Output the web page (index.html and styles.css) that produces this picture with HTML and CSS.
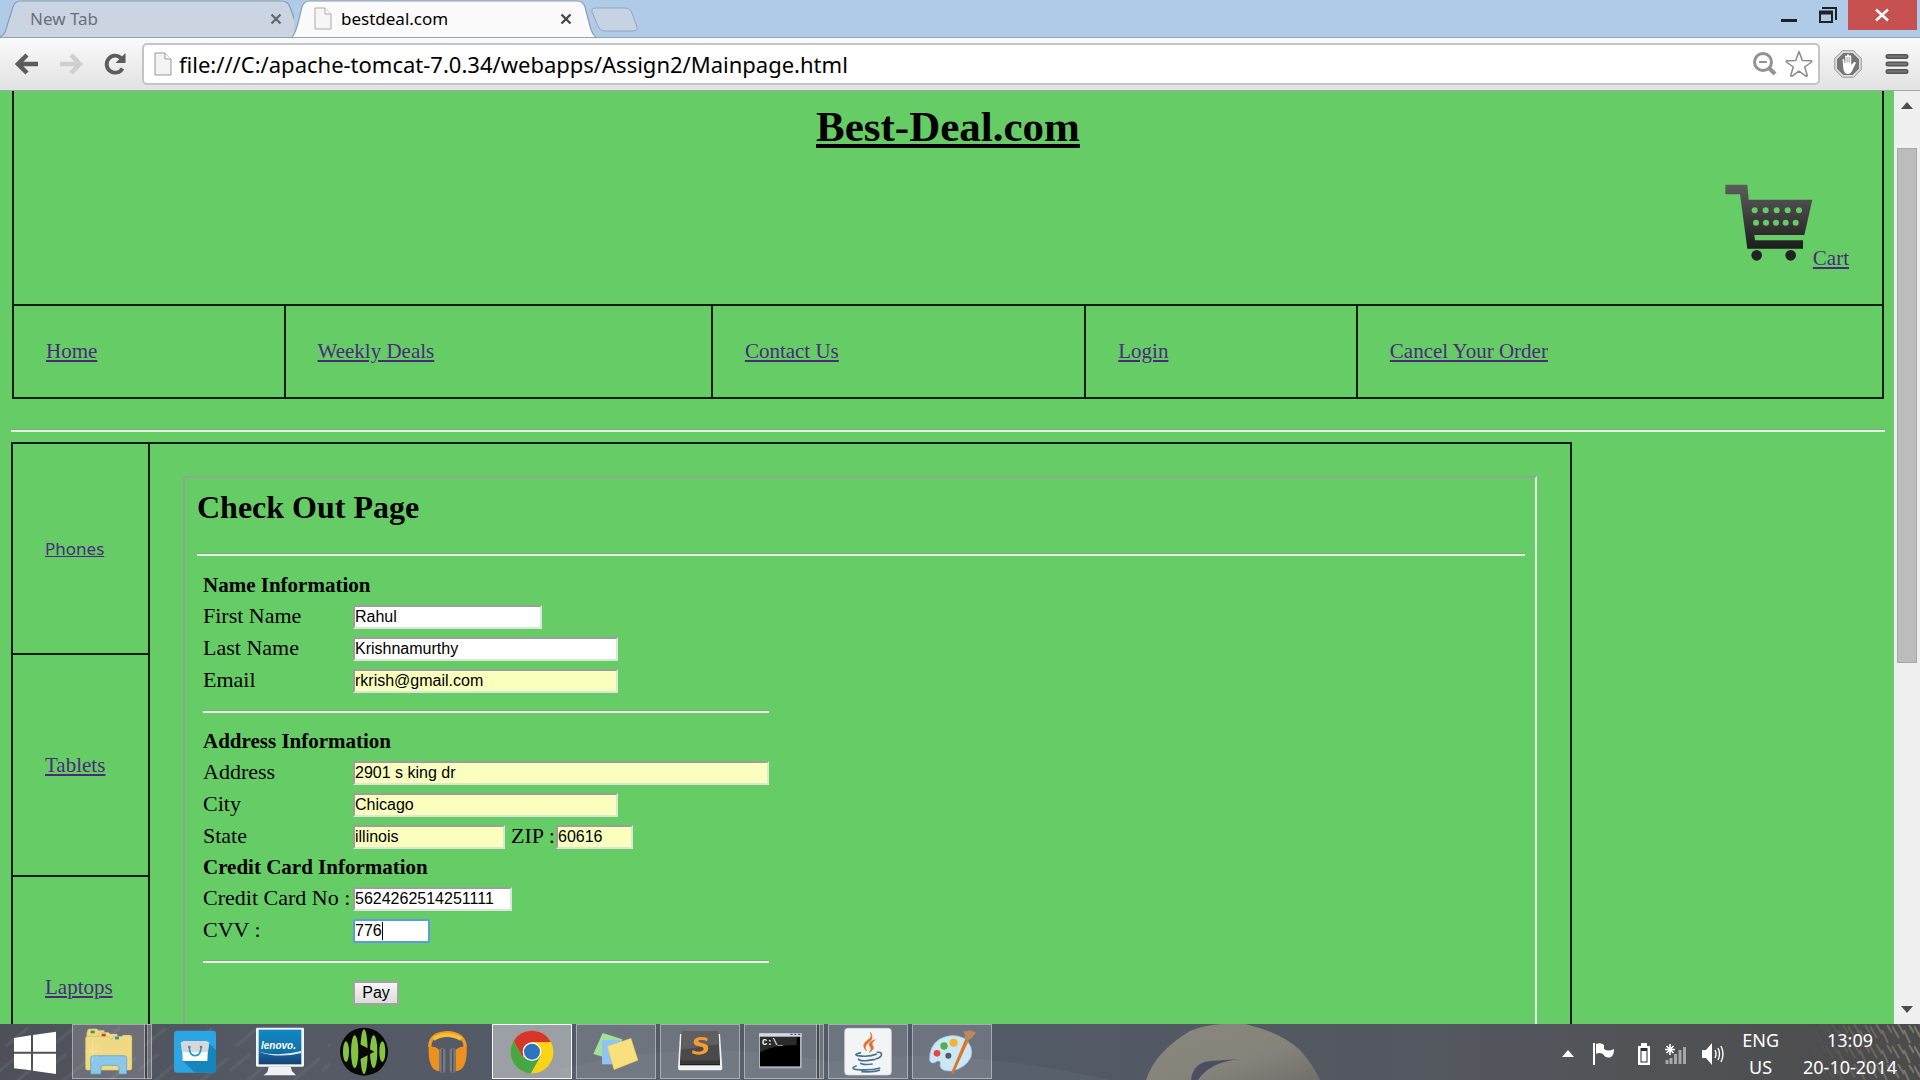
FILE: index.html
```html
<!DOCTYPE html>
<html lang="en">
<head>
<meta charset="utf-8">
<title>bestdeal.com</title>
<link rel="stylesheet" href="styles.css">
</head>
<body>
<header class="browser">
  <div class="tabstrip">
    <div class="tab tab-back">
      <svg class="tab-shape" viewBox="0 0 296 37" preserveAspectRatio="none" aria-hidden="true"><path d="M0 37C5 35 6 30 8 23L13 7Q15 1 21 1H283Q290 1 292 7L298 24V37Z" fill="#cbd5e2"/><path d="M0 37C5 35 6 30 8 23L13 7Q15 1 21 1H283Q290 1 292 7L298 24" fill="none" stroke="#8b9cb0" stroke-width="1.2"/></svg>
      <span class="tab-title">New Tab</span>
      <button class="tab-close" aria-label="Close New Tab"><svg viewBox="0 0 12 12"><path d="M1.500 1.500l9 9M10.500 1.500l-9 9" stroke="#5f6770" stroke-width="2.300"/></svg></button>
    </div>
    <div class="tab tab-front">
      <svg class="tab-shape" viewBox="0 0 304 38" preserveAspectRatio="none" aria-hidden="true"><path d="M0 38C3 35 4 31 6 24L10 7Q12 1 18 1H285Q291 1 293 7L298 27Q300 35 304 38Z" fill="#fbfbfb"/><path d="M0 38C3 35 4 31 6 24L10 7Q12 1 18 1H285Q291 1 293 7L298 27Q300 35 304 38" fill="none" stroke="#8b9cb0" stroke-width="1.200"/></svg>
      <svg class="tab-page" viewBox="0 0 18 23" aria-hidden="true"><path d="M1 1H11L17 7V22H1Z" fill="#f6f6f6" stroke="#a9a9a9"/><path d="M11 1V7H17" fill="#fff" stroke="#a9a9a9"/></svg>
      <span class="tab-title">bestdeal.com</span>
      <button class="tab-close" aria-label="Close bestdeal.com"><svg viewBox="0 0 12 12"><path d="M1.500 1.500l9 9M10.500 1.500l-9 9" stroke="#454545" stroke-width="2.300"/></svg></button>
    </div>
    <button class="tab-new" aria-label="New tab"><svg viewBox="0 0 48 25"><path d="M5 1H34Q39 1 41 6L46 20Q47 24 42 24H14Q9 24 7 19L1 5Q0 1 5 1Z" fill="#c6d3e2" stroke="#93a5ba"/></svg></button>
    <div class="window-buttons">
      <button class="win-btn" aria-label="Minimise"><svg viewBox="0 0 58 30"><path d="M21 20.500H37" stroke="#1f2223" stroke-width="3"/></svg></button>
      <button class="win-btn win-restore" aria-label="Restore"><svg viewBox="0 0 20 30"><path d="M4 8H18V20" fill="none" stroke="#1f2223" stroke-width="2"/><path d="M2 12H14V22H2Z" fill="none" stroke="#1f2223" stroke-width="2"/><path d="M1 12.500H15" stroke="#1f2223" stroke-width="4"/></svg></button>
      <button class="win-btn win-close" aria-label="Close"><svg viewBox="0 0 69 30"><path d="M28 9.500L40 20.500M40 9.500L28 20.500" stroke="#fff" stroke-width="2.500"/></svg></button>
    </div>
  </div>
  <div class="toolbar">
    <button class="tool" aria-label="Back"><svg width="26" height="26" viewBox="0 0 26 26"><path d="M24 13H5M13 4L4 13L13 22" fill="none" stroke="#5c5c5c" stroke-width="4.500"/></svg></button>
    <button class="tool" aria-label="Forward"><svg width="26" height="26" viewBox="0 0 26 26"><path d="M2 13H21M13 4L22 13L13 22" fill="none" stroke="#cfcfcf" stroke-width="4.500"/></svg></button>
    <button class="tool" aria-label="Reload"><svg width="26" height="26" viewBox="0 0 26 26"><path d="M20.500 17.500A8.500 8.500 0 1 1 19 7" fill="none" stroke="#5c5c5c" stroke-width="3.800"/><path d="M23.500 2V12H13.500Z" fill="#5c5c5c"/></svg></button>
    <div class="omnibox">
      <svg class="page-icon" viewBox="0 0 18 24" aria-hidden="true"><path d="M1 1H11L17 7V23H1Z" fill="#f3f3f3" stroke="#999"/><path d="M11 1V7H17" fill="#fff" stroke="#999"/></svg>
      <input class="url" type="text" aria-label="Address" value="file:///C:/apache-tomcat-7.0.34/webapps/Assign2/Mainpage.html">
      <button class="tool" aria-label="Zoom"><svg width="26" height="28" viewBox="0 0 26 28"><circle cx="11" cy="12" r="8.500" fill="none" stroke="#929292" stroke-width="3"/><path d="M7 12H15" stroke="#929292" stroke-width="2"/><path d="M17 18L23 24" stroke="#929292" stroke-width="4"/></svg></button>
      <button class="tool" aria-label="Bookmark this page"><svg width="28" height="28" viewBox="0 0 28 28"><path d="M14 1.500L17.300 10.500L26.500 10.700Q27 11.300 26.500 12L19.700 17L22.300 25.500Q22 26.500 21 26.200L14 21.200L7 26.200Q6 26.500 5.700 25.500L8.300 17L1.500 12Q1 11.300 1.500 10.700L10.700 10.500Z" fill="#fff" stroke="#8a8a8a" stroke-width="1.500" stroke-linejoin="round"/></svg></button>
    </div>
    <button class="tool tool-block" aria-label="AdBlock"><svg width="28" height="28" viewBox="0 0 28 28"><path d="M8.500 .7H19.500L27.300 8.500V19.500L19.500 27.300H8.500L.7 19.500V8.500Z" fill="#ddd" stroke="#999"/><path d="M9.300 3H18.700L25 9.300V18.700L18.700 25H9.300L3 18.700V9.300Z" fill="#767676"/><path d="M8.500 9.500Q9.700 8.500 10.400 10L11 13V6.200Q12 4.800 13 6.200V12.500V5Q14 3.600 15.100 5V12.500V6Q16.200 4.700 17.200 6V15L19.500 12.500Q21.200 11.300 22 12.700L18.500 20Q17 24 13.500 24Q9.500 23.500 9.300 18Z" fill="#fff"/><path d="M10.900 7V13M13.050 7V12.500M15.150 7V12.500" stroke="#767676" stroke-width=".7"/></svg></button>
    <button class="tool" aria-label="Menu"><svg width="24" height="22" viewBox="0 0 24 22"><path d="M3 3.500H21M3 11H21M3 18.500H21" stroke="#555" stroke-width="5" stroke-linecap="round"/><path d="M3 3.500H21M3 11H21M3 18.500H21" stroke="#777" stroke-width="2" stroke-linecap="round"/></svg></button>
  </div>
</header>

<div class="viewport">
  <main class="page">
    <div class="masthead">
      <div class="banner">
        <h1>Best-Deal.com</h1>
        <div class="cart">
          <svg class="cart-icon" viewBox="134 74 264 234" aria-hidden="true">
            <defs><linearGradient id="cart-fill" x1="0" y1="0" x2="0" y2="1"><stop offset="0" stop-color="#5c5c5c"/><stop offset=".6" stop-color="#383838"/><stop offset="1" stop-color="#1c1c1c"/></linearGradient></defs>
            <path d="M135 76H201L205 121H396L372 227H222L224 243H368V268H201L179 105H135Z" fill="url(#cart-fill)"/>
            <g fill="#222"><circle cx="229" cy="288" r="16"/><circle cx="331" cy="288" r="16"/></g>
            <g fill="#66cd66"><circle cx="223" cy="153" r="9"/><circle cx="256" cy="153" r="9"/><circle cx="289" cy="153" r="9"/><circle cx="322" cy="153" r="9"/><circle cx="356" cy="153" r="9"/><circle cx="227" cy="190" r="9"/><circle cx="257" cy="190" r="9"/><circle cx="287" cy="190" r="9"/><circle cx="316" cy="190" r="9"/><circle cx="346" cy="190" r="9"/></g>
          </svg>
          <a href="#cart">Cart</a>
        </div>
      </div>
      <nav class="mainnav">
        <div class="navcell"><a href="#home">Home</a></div>
        <div class="navcell"><a href="#deals">Weekly Deals</a></div>
        <div class="navcell"><a href="#contact">Contact Us</a></div>
        <div class="navcell"><a href="#login">Login</a></div>
        <div class="navcell"><a href="#cancel">Cancel Your Order</a></div>
      </nav>
    </div>
    <hr class="rule rule-page">
    <div class="columns">
      <nav class="sidebar">
        <div class="sidecell"><a class="small-link" href="#phones">Phones</a></div>
        <div class="sidecell"><a href="#tablets">Tablets</a></div>
        <div class="sidecell"><a href="#laptops">Laptops</a></div>
      </nav>
      <section class="content">
        <div class="checkout">
          <h2>Check Out Page</h2>
          <hr class="rule rule-title">
          <form class="form">
            <div class="rows">
              <h3>Name Information</h3>
              <label for="first">First Name</label><div class="field"><input class="w-first" id="first" type="text" value="Rahul"></div>
              <label for="last">Last Name</label><div class="field"><input class="w-wide" id="last" type="text" value="Krishnamurthy"></div>
              <label for="email">Email</label><div class="field"><input class="w-wide filled" id="email" type="text" value="rkrish@gmail.com"></div>
            </div>
            <hr class="rule rule-form">
            <div class="rows">
              <h3>Address Information</h3>
              <label for="address">Address</label><div class="field"><input class="w-full filled" id="address" type="text" value="2901 s king dr"></div>
              <label for="city">City</label><div class="field"><input class="w-wide filled" id="city" type="text" value="Chicago"></div>
              <label for="state">State</label><div class="field"><input class="w-state filled" id="state" type="text" value="illinois"><label class="zip" for="zip">ZIP :</label><input class="w-short filled" id="zip" type="text" value="60616"></div>
              <h3>Credit Card Information</h3>
              <label for="card">Credit Card No :</label><div class="field"><input class="w-card" id="card" type="text" value="5624262514251111"></div>
              <label for="cvv">CVV :</label><div class="field"><input class="w-short focused" id="cvv" type="text" value="776"><span class="caret"></span></div>
            </div>
            <hr class="rule rule-form">
            <div class="actions"><button class="pay" type="button">Pay</button></div>
          </form>
        </div>
      </section>
    </div>
  </main>
  <div class="scrollbar" aria-hidden="true">
    <svg class="scroll-arrow" viewBox="0 0 12 7"><path d="M6 0L12 7H0Z" fill="#4d4d4d"/></svg>
    <div class="track"><div class="thumb"></div></div>
    <svg class="scroll-arrow" viewBox="0 0 12 7"><path d="M6 7L12 0H0Z" fill="#4d4d4d"/></svg>
  </div>
</div>

<footer class="taskbar">
  <svg class="wallpaper" viewBox="0 0 1920 56" preserveAspectRatio="none" aria-hidden="true">
    <defs>
      <linearGradient id="sea" x1="0" x2="1"><stop offset="0" stop-color="#4d5059"/><stop offset=".15" stop-color="#555a65"/><stop offset=".5" stop-color="#515a67"/><stop offset=".75" stop-color="#54585f"/><stop offset="1" stop-color="#4c4b4b"/></linearGradient>
      <pattern id="streaks" width="46" height="56" patternUnits="userSpaceOnUse"><path d="M-4 50L20 30M16 58L44 34M6 22L28 4" stroke="#777a80" stroke-width="3" opacity=".25"/></pattern>
      <pattern id="grass" width="22" height="20" patternUnits="userSpaceOnUse"><path d="M0 2L7 14M6 0L12 10M12 6L18 19M17 1L22 9" stroke="#a3998a" stroke-width="2" opacity=".6"/></pattern>
      <linearGradient id="fade"><stop offset="0" stop-color="#000"/><stop offset="1" stop-color="#fff"/></linearGradient>
      <mask id="grass-mask"><rect x="1810" width="110" height="56" fill="url(#fade)"/></mask>
      <linearGradient id="stone" x1="0" y1="0" x2="1" y2="1"><stop offset="0" stop-color="#8a877f"/><stop offset=".6" stop-color="#86837b"/><stop offset="1" stop-color="#716f6b"/></linearGradient>
    </defs>
    <rect width="1920" height="56" fill="url(#sea)"/>
    <rect width="330" height="56" fill="url(#streaks)"/>
    <path d="M560 45Q700 12 830 38Q950 20 1110 56H560Z" fill="#68717b" opacity=".3"/>
    <path d="M1146 56Q1155 28 1190 7Q1210 -2 1245 0Q1280 8 1300 26Q1314 42 1320 56Z" fill="url(#stone)"/>
    <path d="M1191 56Q1193 38 1211 37L1240 35Q1210 38 1198 56Z" fill="#4b5060"/>
    <rect x="1810" width="110" height="56" fill="url(#grass)" mask="url(#grass-mask)"/>
  </svg>
  <div class="apps">
    <button class="start" aria-label="Start"><svg width="68" height="55" viewBox="0 13 204 165"><path d="M42 52L93 44V93H42ZM99 43L168 33V93H99ZM42 99H93V149L42 143ZM99 99H168V160L99 150Z" fill="#fff"/></svg></button>
    <button class="app open stacked" aria-label="File Explorer"><svg width="80" height="55" viewBox="216 13 240 165"><path d="M263 30L268 27H290L296 32H313V60H260V40Z" fill="#ecd78a" stroke="#b99c45"/><path d="M296 42L302 38H325L331 43H352V65H290Z" fill="#f0dc90" stroke="#b99c45"/><path d="M256 55L260 50H325L335 60L340 50H365L370 46H390Q396 47 396 53V146Q396 152 389 152H264Q256 152 256 146Z" fill="#f0d983" stroke="#b99c45"/><rect x="272" y="33" width="12" height="8" fill="#4a9a3d"/><rect x="305" y="42" width="12" height="8" fill="#c8402e"/><rect x="345" y="51" width="12" height="8" fill="#3b8fbe"/><path d="M272 163V115Q272 108 280 108H372Q380 108 380 115V163H357V146Q357 137 348 137H312Q303 137 303 146V163Z" fill="#8ac7e8" stroke="#5d9cc4" stroke-width="2"/><path d="M278 66V126M256 96H306M262 80L294 114M294 80L262 114" stroke="#fff" stroke-width="2" opacity=".4"/></svg></button>
    <button class="app" aria-label="Lenovo Store"><svg width="80" height="55" viewBox="468 13 240 165"><rect x="522" y="33" width="126" height="126" rx="9" fill="#2ba5e4"/><path d="M628 72L648 92V150Q648 159 638 159H585L547 122Z" fill="#1485bd"/><path d="M546 68L552 65H618L625 68L622 124H548Z" fill="#fff"/><path d="M542 68L552 65H620L628 69L624 98H546Z" fill="#d4d8da"/><path d="M568 82Q568 108 585 108Q603 108 603 82" fill="none" stroke="#1b9bd6" stroke-width="5"/><circle cx="568" cy="82" r="4" fill="#777"/><circle cx="603" cy="82" r="4" fill="#777"/></svg></button>
    <button class="app" aria-label="Lenovo"><svg width="80" height="55" viewBox="720 13 240 165"><defs><linearGradient id="screen" x1="0" y1="0" x2="0" y2="1"><stop offset="0" stop-color="#1387c4"/><stop offset=".6" stop-color="#1272aa"/><stop offset="1" stop-color="#173f73"/></linearGradient></defs><rect x="768" y="24" width="144" height="117" rx="4" fill="#f4f6f8"/><rect x="776" y="30" width="128" height="104" fill="url(#screen)"/><path d="M776 96Q835 112 904 94V100Q835 117 776 96Z" fill="#d9ecf6"/><path d="M806 141H872L876 155Q884 162 888 167H790Q800 162 803 155Z" fill="#eef0f3"/><text x="783" y="87" class="logo-lenovo">lenovo.</text></svg></button>
    <button class="app" aria-label="Media player"><svg width="80" height="55" viewBox="972 13 240 165"><circle cx="1092" cy="96" r="72" fill="#060806"/><g fill="#86c440"><ellipse cx="1038" cy="96" rx="9" ry="31"/><ellipse cx="1064" cy="96" rx="11" ry="49"/><ellipse cx="1092" cy="96" rx="11" ry="67"/><ellipse cx="1121" cy="96" rx="11" ry="49"/><ellipse cx="1147" cy="96" rx="9" ry="31"/></g><path d="M1077 72L1123 96L1077 120Z" fill="#060806"/></svg></button>
    <button class="app" aria-label="Google Music"><svg width="80" height="55" viewBox="1224 13 240 165"><path d="M1289 82Q1290 41 1342 39Q1392 40 1396 82" fill="none" stroke="#f29a21" stroke-width="10"/><path d="M1300 58Q1340 34 1384 58" fill="none" stroke="#f7bd3c" stroke-width="12"/><path d="M1286 82Q1302 76 1318 90V155Q1300 152 1294 138Q1284 118 1286 82Z" fill="#ec9020"/><path d="M1400 82Q1384 76 1367 90V155Q1385 152 1392 138Q1402 118 1400 82Z" fill="#ec9020"/><rect x="1318" y="86" width="18" height="73" rx="7" fill="#777c82"/><rect x="1349" y="86" width="18" height="73" rx="7" fill="#777c82"/><path d="M1327 88V158M1358 88V158" stroke="#4b5057" stroke-width="4"/></svg></button>
    <button class="app open active" aria-label="Google Chrome"><svg width="80" height="55" viewBox="36 13 240 165"><circle cx="156" cy="97" r="64" fill="#e3b90e"/><path d="M101 64A64 64 0 0 1 213 68H156L127 112Z" fill="#d8352a"/><path d="M101 64A64 64 0 0 0 153 161L182 110L128 113Z" fill="#49a644"/><path d="M156 68H213A64 64 0 0 1 153 161L183 108Z" fill="#fbd318"/><circle cx="156" cy="96" r="28" fill="#fff"/><circle cx="156" cy="96" r="24" fill="#2c74bd"/></svg></button>
    <button class="app open" aria-label="Sticky Notes"><svg width="80" height="55" viewBox="288 13 240 165"><path d="M368 40L427 59L404 122L340 103Z" fill="#a5df9b"/><path d="M366 61H426V134H366Z" fill="#8fc3f3"/><path d="M382 80L453 56L474 122L402 150Z" fill="#f9e07d" stroke="#e2c452"/></svg></button>
    <button class="app open" aria-label="Sublime Text"><svg width="80" height="55" viewBox="540 13 240 165"><path d="M600 43H720L727 144Q727 152 720 152H602Q594 152 594 144Z" fill="#f1f1f1"/><path d="M600 122H720V137H600Z" fill="#151515"/><path d="M611 34H709Q714 34 715 40L720 122H600L605 40Q606 34 611 34Z" fill="#4a4a4a"/><path d="M605 44Q606 34 611 34H709Q714 34 715 44L718 74L603 90Z" fill="#5f5f5f"/><path d="M600 122H720V134H600Z" fill="#383838"/><path d="M683 56Q677 52 661 52Q642 53 641 67Q641 76 653 79Q671 81 671 88Q670 95 657 96Q645 96 638 91L636 101Q644 105 658 105Q684 104 685 86Q685 74 669 71Q655 68 655 64Q656 60 664 60Q673 61 681 65Z" fill="#f79a33"/></svg></button>
    <button class="app open stacked" aria-label="Command Prompt"><svg width="80" height="55" viewBox="792 13 240 165"><rect x="837" y="41" width="128" height="105" fill="#aeb4bb"/><rect x="840" y="44" width="120" height="96" fill="#000"/><path d="M840 98Q880 76 950 76V52H840Z" fill="#2b2b2b"/><path d="M837 41H965V51H837Z" fill="#d5d7e2"/><path d="M931 44H938M943 44H949M954 44H961" stroke="#51539a" stroke-width="4"/><text x="846" y="76" class="prompt">C:\_</text></svg></button>
    <button class="app open" aria-label="Java"><svg width="80" height="55" viewBox="1044 13 240 165"><rect x="1094" y="26" width="140" height="140" rx="10" fill="#f3f4f6" stroke="#d6d9dd" stroke-width="2"/><path d="M1171 38Q1179 52 1161 63Q1142 76 1159 93Q1151 78 1165 69Q1184 57 1171 38ZM1185 60Q1158 70 1172 83Q1176 90 1168 98Q1187 87 1177 77Q1172 71 1185 60Z" fill="#e56d24" stroke="#e56d24" stroke-width="2"/><g fill="none" stroke="#47708f" stroke-width="5"><path d="M1143 99Q1118 104 1134 108Q1166 113 1191 103"/><path d="M1136 116Q1134 125 1160 123L1186 119M1141 130Q1146 137 1178 133"/><path d="M1190 98Q1208 96 1204 107Q1200 115 1186 118"/><path d="M1130 138Q1106 147 1134 150Q1174 153 1201 145M1200 151Q1185 158 1144 156"/></g></svg></button>
    <button class="app open" aria-label="Paint"><svg width="80" height="55" viewBox="1296 13 240 165"><path d="M1349 123Q1346 80 1378 59Q1417 38 1453 56Q1482 80 1473 112Q1457 146 1414 154Q1382 156 1380 137Q1385 123 1372 124Q1356 136 1349 123Z" fill="#cbe6f5" stroke="#9dc7de" stroke-width="2"/><circle cx="1405" cy="108" r="9" fill="#4f5b69"/><circle cx="1371" cy="101" r="10" fill="#e5473f"/><circle cx="1392" cy="79" r="11" fill="#52b343"/><circle cx="1421" cy="69" r="12" fill="#f4b430"/><path d="M1456 57L1467 61L1420 163L1413 161Z" fill="#d9782b"/><path d="M1450 33Q1463 38 1468 31Q1480 36 1488 38Q1476 58 1464 62L1454 58Q1457 48 1450 33Z" fill="#ba8a5b"/></svg></button>
  </div>
  <div class="tray">
    <svg width="12" height="8" viewBox="0 0 12 8" aria-hidden="true"><path d="M6 0L12 7H0Z" fill="#fff"/></svg>
    <svg class="tray-flag" width="24" height="24" viewBox="0 0 24 24" aria-hidden="true"><path d="M2 1V23" stroke="#fff" stroke-width="2"/><path d="M4 2Q9 0 12 3V7Q16 10 22 7Q22 13 19 15Q14 17 11 12Q7 10 4 12Z" fill="#fff"/></svg>
    <svg width="14" height="24" viewBox="0 0 14 24" aria-hidden="true"><path d="M4 1H10V4H13V23H1V4H4Z" fill="#fff"/><path d="M3.500 6H10.500V20.500H3.500Z" fill="#2b2e33"/><path d="M4.500 9H9.500V19.500H4.500Z" fill="#fff"/></svg>
    <svg width="22" height="22" viewBox="0 0 22 22" aria-hidden="true"><path d="M2 21V17M6 21V15M10.500 21V11M15 21V7M19.500 21V4" stroke="#a5a7aa" stroke-width="3"/><path d="M5 1V12M0 6.500H10M1.500 3L8.500 10M8.500 3L1.500 10" stroke="#fff" stroke-width="1.600"/></svg>
    <svg class="tray-sound" width="24" height="24" viewBox="0 0 24 24" aria-hidden="true"><path d="M1 8H5L11 1V23L5 16H1Z" fill="#fff"/><path d="M14 8Q16 12 14 16M17 6Q20 12 17 18M20 4Q24 12 20 20" fill="none" stroke="#fff" stroke-width="1.400"/></svg>
    <div class="lang"><span>ENG</span><span>US</span></div>
    <div class="clock"><span>13:09</span><span>20-10-2014</span></div>
  </div>
</footer>
</body>
</html>
```
FILE: styles.css
```css
* { box-sizing: border-box; }

body {
  margin: 0;
  height: 100vh;
  display: flex;
  flex-direction: column;
  overflow: hidden;
  background: #66cd66;
  font-family: "Liberation Serif", "Times New Roman", serif;
  font-size: 21px;
  color: #000;
}

button {
  margin: 0;
  padding: 0;
  border: 0;
  background: none;
}

button svg { display: block; }

/* Browser frame */
.browser {
  flex: none;
  font-family: "Noto Sans", "Open Sans", sans-serif;
}

.tabstrip {
  display: flex;
  height: 37px;
  background: #b0cbe8;
}

.tab {
  position: relative;
  display: flex;
  align-items: center;
  height: 37px;
  font-size: 17px;
}

.tab-shape {
  position: absolute;
  inset: 0;
  width: 100%;
  height: 100%;
}

.tab-back {
  width: 294px;
  padding: 0 12px 0 30px;
  color: #66717d;
}

.tab-front {
  width: 304px;
  margin-left: -2px;
  padding: 0 24px 0 22px;
  gap: 9px;
}

.tab-page { position: relative; width: 18px; height: 23px; }
.tab-title { position: relative; flex: 1; }
.tab-close { position: relative; width: 12px; height: 12px; }
.tab-new { width: 48px; height: 25px; margin: 7px 0 0 -5px; }

.window-buttons {
  display: flex;
  height: 30px;
  margin-left: auto;
  padding-right: 3px;
}

.win-btn svg { height: 30px; }
.win-restore { margin-right: 10px; }
.win-close { background: #c75050; }

.toolbar {
  display: flex;
  align-items: center;
  gap: 18px;
  height: 54px;
  padding: 0 11px 1px 14px;
  background: linear-gradient(#fafafa, #e2e2e2);
  border-top: 1px solid #8fa2b8;
  border-bottom: 1px solid #a6a6a6;
}

.omnibox {
  flex: 1;
  display: flex;
  align-items: center;
  gap: 7px;
  height: 42px;
  margin-left: -4px;
  padding: 0 5px 0 10px;
  background: #fff;
  border: 2px solid #c4c4c4;
  border-radius: 5px;
}

.page-icon { width: 18px; height: 24px; }

.url {
  flex: 1;
  min-width: 0;
  border: 0;
  padding: 0;
  outline: 0;
  background: none;
  font-family: inherit;
  font-size: 22px;
}

.tool-block { margin-left: -4px; margin-right: 5px; }

/* Page area */
.viewport {
  flex: 1;
  min-height: 0;
  display: flex;
}

.page {
  flex: 1;
  min-width: 0;
  overflow: hidden;
  padding: 0 9px 0 11px;
}

.scrollbar {
  width: 26px;
  display: flex;
  flex-direction: column;
  align-items: center;
  padding: 11px 0;
  background: #f0f0f0;
}

.scroll-arrow { width: 12px; height: 7px; }

.track {
  flex: 1;
  width: 20px;
  padding: 39px 0 0;
}

.thumb {
  height: 60%;
  background: #bcbcbc;
  border: 1px solid #a8a8a8;
}

a {
  color: #4b2a7b;
  text-decoration: underline;
}

.masthead {
  margin: 0 1px;
  border: 2px solid #0f1c0f;
  border-top: 0;
}

.banner {
  padding: 11px 33px 34px;
}

h1 {
  margin: 0;
  font-size: 43px;
  line-height: 50px;
  text-align: center;
  text-decoration: underline;
}

.cart {
  display: flex;
  justify-content: flex-end;
  align-items: flex-end;
  margin-top: 32px;
  line-height: 24px;
}

.cart-icon { width: 88px; height: 78px; margin-bottom: 8px; }

.mainnav {
  display: grid;
  grid-template-columns: 270fr 428fr 374fr 272fr 527fr;
  border-top: 2px solid #0f1c0f;
}

.navcell {
  padding: 32px 32px 33px;
  line-height: 26px;
}

.navcell + .navcell { border-left: 2px solid #0f1c0f; }

.rule {
  margin: 0;
  border: 0;
  border-top: 1px solid #8f9f8f;
  border-bottom: 2px solid #dff3df;
}

.rule-page { margin: 30px 0 10px; }

.columns {
  display: flex;
  width: 83.3%;
  border: 2px solid #0f1c0f;
}

.sidebar {
  flex: none;
  width: 137px;
  border-right: 2px solid #0f1c0f;
}

.sidecell {
  display: flex;
  align-items: center;
  height: 222px;
  padding-left: 32px;
  border-bottom: 2px solid #0f1c0f;
}

.sidecell:first-child { height: 211px; }

.small-link {
  font-family: "Noto Sans", "Open Sans", sans-serif;
  font-size: 17px;
}

.content {
  flex: 1;
  padding: 32px 33px;
}

.checkout {
  border: 2px solid;
  border-color: #8fa68f #dff3df #dff3df #8fa68f;
  padding: 11px 10px 60px 12px;
}

h2 {
  margin: 0;
  font-size: 32px;
  line-height: 36px;
}

.rule-title { margin: 28px 0 19px; }

.form {
  width: 566px;
  margin-left: 6px;
}

.rows {
  display: grid;
  grid-template-columns: 150px 1fr;
  row-gap: 8px;
}

h3 {
  grid-column: 1 / 3;
  height: 22px;
  margin: 0;
  font-size: 21px;
  line-height: 20px;
}

.rows label {
  height: 24px;
  font-size: 22px;
  line-height: 22px;
  white-space: nowrap;
}

.field {
  position: relative;
  display: flex;
}

.field input {
  height: 24px;
  padding: 0;
  border: 2px solid;
  border-color: #9a9f9a #d9e6d9 #d9e6d9 #9a9f9a;
  border-radius: 0;
  outline: 0;
  background: #fff;
  font-family: "Liberation Sans", Arial, sans-serif;
  font-size: 16px;
}

.field .filled { background: #faffbd; }
.field .focused { border-color: #5b9be0; border-radius: 2px; }
.w-first { width: 189px; }
.w-wide { width: 265px; }
.w-full { width: 416px; }
.w-state { width: 152px; }
.w-card { width: 159px; }
.w-short { width: 77px; }
.zip { width: 51px; padding-left: 6px; }

.caret {
  position: absolute;
  left: 29px;
  top: 3px;
  width: 1px;
  height: 18px;
  background: #000;
}

.rule-form { margin: 17px 0 18px; }
.actions { padding-left: 150px; }

.pay {
  display: block;
  width: 46px;
  height: 24px;
  border: 2px solid #a3a3a3;
  background: linear-gradient(#f6f6f6, #dcdcdc);
  font-family: "Liberation Sans", Arial, sans-serif;
  font-size: 16px;
}

/* Taskbar */
.taskbar {
  position: relative;
  flex: none;
  display: flex;
  justify-content: space-between;
  height: 56px;
  background: #50565f;
  color: #fff;
  font-family: "Noto Sans", "Open Sans", sans-serif;
}

.wallpaper {
  position: absolute;
  inset: 0;
  width: 100%;
  height: 100%;
}

.apps {
  position: relative;
  display: flex;
  gap: 4px;
}

.app { height: 55px; }

.open {
  background: rgba(255, 255, 255, .16);
  box-shadow: inset 0 0 0 1px rgba(255, 255, 255, .4);
}

.active {
  background: rgba(255, 255, 255, .42);
  box-shadow: inset 0 0 0 1px rgba(255, 255, 255, .9);
}

.stacked {
  background: linear-gradient(90deg, rgba(255, 255, 255, .16) 72px, rgba(255, 255, 255, .5) 72px 73px, rgba(0, 0, 0, .2) 73px 75px, rgba(255, 255, 255, .4) 75px 76px, rgba(255, 255, 255, .16) 76px);
}

.logo-lenovo {
  font: italic bold 30px "Liberation Sans", Arial, sans-serif;
  fill: #fff;
}

.prompt {
  font: bold 26px "Liberation Mono", monospace;
  fill: #fff;
}

.tray {
  position: relative;
  display: flex;
  align-items: center;
  gap: 14px;
  padding: 3px 23px 0 0;
  font-size: 18px;
}

.tray-flag { margin-left: 4px; margin-right: 7px; }

.lang,
.clock {
  display: flex;
  flex-direction: column;
  align-items: center;
  line-height: 27px;
}

.lang { margin-left: 3px; }
.clock { margin-left: 10px; }
```
